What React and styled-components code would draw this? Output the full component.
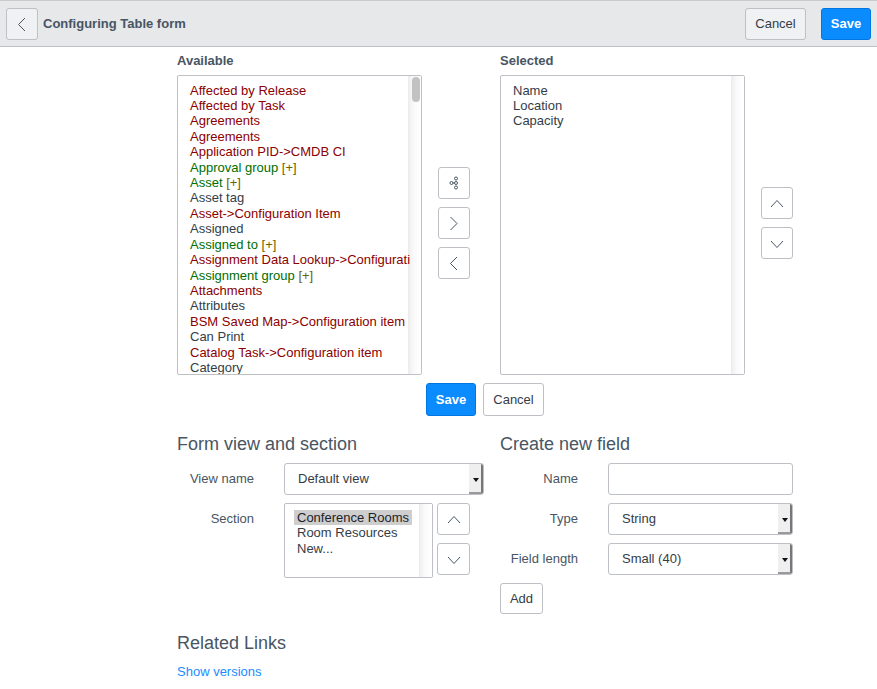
import React from "react";
import styled, { createGlobalStyle } from "styled-components";

const Global = createGlobalStyle`
  html, body { margin: 0; padding: 0; background: #fff; }
  body { font-family: "Liberation Sans", Arial, sans-serif; font-size: 13px; color: #343d47; -webkit-font-smoothing: antialiased; overflow: hidden; }
  * { box-sizing: border-box; }
`;

const Page = styled.div`width: 877px; height: 689px; overflow: hidden;`;

const Header = styled.header`
  height: 47px;
  background: #e6e8ea;
  border-top: 1px solid #cbcbcb;
  border-bottom: 1px solid #bdc0c4;
  display: flex;
  align-items: center;
  padding: 0 6px;
`;

const Title = styled.h1`
  margin: 0 0 0 5px;
  font-size: 13px;
  font-weight: 700;
  color: #485563;
  flex: 1;
`;

const Btn = styled.button`
  height: ${p => p.$h || 32}px;
  width: ${p => p.$w}px;
  padding: 0;
  border-radius: 3px;
  font: ${p => (p.$primary ? 700 : 400)} 13px "Liberation Sans", Arial, sans-serif;
  border: 1px solid ${p => (p.$primary ? "#0076e0" : "#bdc0c4")};
  background: ${p => (p.$primary ? "#0a8cff" : p.$bar ? "#f0f1f3" : "#fff")};
  color: ${p => (p.$primary ? "#fff" : "#343d47")};
  margin-left: ${p => p.$ml || 0}px;
  display: flex;
  align-items: center;
  justify-content: center;
  flex: none;
`;

const Icon = styled.svg`
  width: 32px;
  height: 32px;
  margin: -1px;
  fill: none;
  stroke: #485563;
  stroke-width: 1;
`;

const Chevron = ({ dir }) => {
  const d = {
    left: "M19 10 L12.5 16.5 L19 23",
    right: "M12.5 10 L19 16.5 L12.5 23",
    up: "M10 20 L16 13.5 L22 20",
    down: "M10 14 L16 20.5 L22 14",
  }[dir];
  return <Icon viewBox="0 0 32 32"><path d={d} /></Icon>;
};

const Tree = () => (
  <Icon viewBox="0 0 32 32">
    <circle cx="13.5" cy="16" r="1.5" />
    <circle cx="18" cy="11.5" r="1.5" />
    <circle cx="18" cy="16" r="1.5" />
    <circle cx="18" cy="20.5" r="1.5" />
    <path d="M15 16h1.5" />
  </Icon>
);

const Content = styled.main`
  width: 616px;
  margin-left: 177px;
`;

const Slush = styled.section`
  display: grid;
  grid-template-columns: 245px 78px 245px 48px;
  height: 336px;
`;

const Column = styled.div`display: flex; flex-direction: column;`;

const Label = styled.div`
  font-weight: 700;
  font-size: 13px;
  line-height: 15px;
  color: #485563;
  margin: 6px 0 7px;
`;

const List = styled.div`
  position: relative;
  height: ${p => p.$h || 300}px;
  border: 1px solid #bdc0c4;
  border-radius: 2px;
  overflow: hidden;
  padding: ${p => p.$pt || 6.5}px 0 0 ${p => p.$pl || 12}px;
  background: #fff;
`;

const Item = styled.div`
  position: relative;
  height: 15.43px;
  line-height: 15.43px;
  font-size: 13px;
  white-space: nowrap;
  color: ${p => ({ ref: "#8b0000", group: "#006e00", plain: "#343d47" }[p.$kind || "plain"])};
`;

const Plus = styled.span`color: #6b6200;`;

const ScrollTrack = styled.div`
  position: absolute;
  top: 0;
  right: 0;
  bottom: 0;
  width: 13px;
  background: linear-gradient(90deg, #efefef, #fafafa 40%, #fff);
  border-left: 1px solid #ececec;
`;

const Thumb = styled.div`
  position: absolute;
  top: 1px;
  left: 2.5px;
  width: 8px;
  height: 25px;
  border-radius: 4px;
  background: #c2c2c2;
`;

const Actions = styled.div`
  display: flex;
  flex-direction: column;
  gap: 8px;
  padding: 120px 0 0 16px;
`;

const Order = styled.div`
  display: flex;
  flex-direction: column;
  gap: 8px;
  padding: 140px 0 0 16px;
`;

const SaveRow = styled.div`
  display: flex;
  justify-content: flex-start;
  gap: 7px;
  padding-left: 249px;
  height: 33px;
`;

const Forms = styled.div`
  display: grid;
  grid-template-columns: 323px 293px;
  margin-top: 17px;
`;

const Heading = styled.h2`
  margin: 0;
  font-size: 18px;
  font-weight: 400;
  line-height: 22px;
  color: #485563;
`;

const Rows = styled.div`
  display: flex;
  flex-direction: column;
  gap: 8px;
  margin-top: 8px;
`;

const Row = styled.div`display: flex; align-items: flex-start;`;

const FieldLabel = styled.label`
  width: ${p => p.$w}px;
  flex: none;
  text-align: right;
  line-height: 32px;
  font-size: 13px;
  color: #485563;
`;

const SelectBox = styled.div`
  position: relative;
  height: 32px;
  width: ${p => p.$w}px;
  margin-left: ${p => p.$ml}px;
  border: 1px solid #bdc0c4;
  border-radius: 3px;
  background: #fff;
  padding-left: 13px;
  line-height: 30px;
  color: #343d47;
  overflow: hidden;
`;

const Stepper = styled.div`
  position: absolute;
  top: 0;
  right: 0;
  bottom: 0;
  width: 14px;
  background: #efefef;
  border-right: 2px solid #777;
  border-bottom: 2px solid #999;
  &::after {
    content: "";
    position: absolute;
    left: 4px;
    top: 14px;
    border: 3px solid transparent;
    border-top: 4px solid #111;
    border-bottom: 0;
  }
`;

const TextField = styled.input`
  height: 32px;
  width: 185px;
  margin-left: 30px;
  border: 1px solid #bdc0c4;
  border-radius: 3px;
  background: #fff;
  padding: 0 8px;
  outline: none;
`;

const Selected = styled.div`
  background: ${p => (p.$on ? "#cecece" : "transparent")};
  height: 15.45px;
  line-height: 15.45px;
  font-size: 13px;
  width: 118px;
  padding-left: 3px;
  white-space: nowrap;
  color: ${p => (p.$on ? "#1c2229" : "#343d47")};
`;

const SectionList = styled(List)`
  width: 149px;
  margin-left: 30px;
  height: 75px;
`;

const SectionButtons = styled.div`
  display: flex;
  flex-direction: column;
  gap: 8px;
  margin-left: 4px;
`;

const Related = styled.div`margin-top: 18px;`;

const LinkText = styled.a`
  display: block;
  margin-top: 10px;
  font-size: 13px;
  line-height: 15px;
  color: #1a8cff;
  text-decoration: none;
`;

const available = [
  ["Affected by Release", "ref"],
  ["Affected by Task", "ref"],
  ["Agreements", "ref"],
  ["Agreements", "ref"],
  ["Application PID->CMDB CI", "ref"],
  ["Approval group", "group"],
  ["Asset", "group"],
  ["Asset tag", "plain"],
  ["Asset->Configuration Item", "ref"],
  ["Assigned", "plain"],
  ["Assigned to", "group"],
  ["Assignment Data Lookup->Configurati", "ref"],
  ["Assignment group", "group"],
  ["Attachments", "ref"],
  ["Attributes", "plain"],
  ["BSM Saved Map->Configuration item", "ref"],
  ["Can Print", "plain"],
  ["Catalog Task->Configuration item", "ref"],
  ["Category", "plain"],
];

export default function App() {
  return (
    <Page>
      <Global />
      <Header>
        <Btn $bar $w={32} aria-label="Back"><Chevron dir="left" /></Btn>
        <Title>Configuring Table form</Title>
        <Btn $bar $w={61}>Cancel</Btn>
        <Btn $primary $w={50} $ml={15}>Save</Btn>
      </Header>
      <Content>
        <Slush>
          <Column>
            <Label>Available</Label>
            <List>
              <ScrollTrack><Thumb /></ScrollTrack>
              {available.map(([t, k], i) => (
                <Item key={i} $kind={k}>
                  {t}{k === "group" && <> <Plus>[+]</Plus></>}
                </Item>
              ))}
            </List>
          </Column>
          <Actions>
            <Btn $w={32} aria-label="Dependencies"><Tree /></Btn>
            <Btn $w={32} aria-label="Add"><Chevron dir="right" /></Btn>
            <Btn $w={32} aria-label="Remove"><Chevron dir="left" /></Btn>
          </Actions>
          <Column>
            <Label>Selected</Label>
            <List>
              <ScrollTrack />
              <Item>Name</Item>
              <Item>Location</Item>
              <Item>Capacity</Item>
            </List>
          </Column>
          <Order>
            <Btn $w={32} aria-label="Move up"><Chevron dir="up" /></Btn>
            <Btn $w={32} aria-label="Move down"><Chevron dir="down" /></Btn>
          </Order>
        </Slush>
        <SaveRow>
          <Btn $primary $w={50} $h={33}>Save</Btn>
          <Btn $w={61} $h={33}>Cancel</Btn>
        </SaveRow>
        <Forms>
          <div>
            <Heading>Form view and section</Heading>
            <Rows>
              <Row>
                <FieldLabel $w={77}>View name</FieldLabel>
                <SelectBox $w={200} $ml={30}>Default view<Stepper /></SelectBox>
              </Row>
              <Row>
                <FieldLabel $w={77}>Section</FieldLabel>
                <SectionList $pt={6} $pl={9}>
                  <Selected $on>Conference Rooms</Selected>
                  <Selected>Room Resources</Selected>
                  <Selected>New...</Selected>
                  <ScrollTrack />
                </SectionList>
                <SectionButtons>
                  <Btn $w={33} aria-label="Section up"><Chevron dir="up" /></Btn>
                  <Btn $w={33} aria-label="Section down"><Chevron dir="down" /></Btn>
                </SectionButtons>
              </Row>
            </Rows>
          </div>
          <div>
            <Heading>Create new field</Heading>
            <Rows>
              <Row>
                <FieldLabel $w={78}>Name</FieldLabel>
                <TextField />
              </Row>
              <Row>
                <FieldLabel $w={78}>Type</FieldLabel>
                <SelectBox $w={185} $ml={30}>String<Stepper /></SelectBox>
              </Row>
              <Row>
                <FieldLabel $w={78}>Field length</FieldLabel>
                <SelectBox $w={185} $ml={30}>Small (40)<Stepper /></SelectBox>
              </Row>
              <Btn $w={43} $h={31}>Add</Btn>
            </Rows>
          </div>
        </Forms>
        <Related>
          <Heading>Related Links</Heading>
          <LinkText href="#">Show versions</LinkText>
        </Related>
      </Content>
    </Page>
  );
}
